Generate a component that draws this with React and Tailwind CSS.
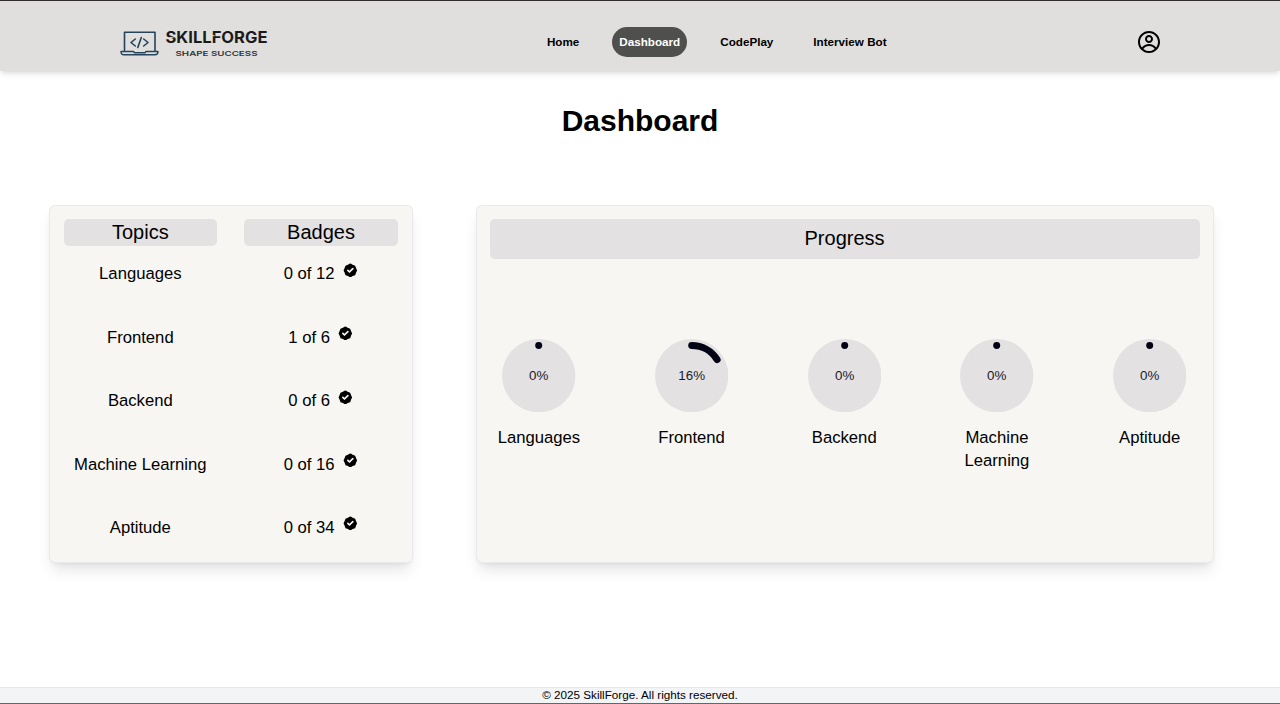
import { CgProfile } from "react-icons/cg";
import { HiBadgeCheck } from "react-icons/hi";

const links = ["Home", "Dashboard", "CodePlay", "Interview Bot"];

const topics = [
  { name: "Languages", earned: 0, total: 12, percent: 0 },
  { name: "Frontend", earned: 1, total: 6, percent: 16 },
  { name: "Backend", earned: 0, total: 6, percent: 0 },
  { name: "Machine Learning", earned: 0, total: 16, percent: 0 },
  { name: "Aptitude", earned: 0, total: 34, percent: 0 },
];

function Logo() {
  return (
    <svg width="150" height="32" viewBox="0 0 150 32" aria-label="SkillForge">
      <g fill="none" stroke="#24445c" strokeWidth="1.600" strokeLinejoin="round" strokeLinecap="round">
        <path d="M5.500 24.500V6.300h30.500v18.200" />
        <path d="M2 25.500h12.500l1 1.200h10.500l1-1.200h12c0 2-1 3.300-3 3.300H5c-2 0-3-1.300-3-3.300z" strokeWidth="1.400" />
        <path d="M16.300 13l-4.300 3.500 4.300 3.500M24.700 13l4.300 3.500-4.300 3.500M22.300 11.500l-3.500 10" />
      </g>
      <text x="46.500" y="17.400" textLength="102" lengthAdjust="spacingAndGlyphs" fill="#1b1b1b" className="font-['Inter'] text-[15.500px] font-bold">SKILLFORGE</text>
      <path d="M45 12.900l11.500-2.400M92 9.700h3.500" stroke="#e0dfdd" strokeWidth="1" />
      <text x="56.500" y="29.700" textLength="82" lengthAdjust="spacingAndGlyphs" fill="#333" className="font-['Inter'] text-[6.500px] font-semibold">SHAPE SUCCESS</text>
    </svg>
  );
}

function Ring({ percent }) {
  const length = 2 * Math.PI * 41;
  return (
    <svg className="size-[73.400px]" viewBox="0 0 100 100">
      <circle cx="50" cy="50" r="50" fill="#e3e1e2" />
      <path
        d="M50 50m0-41a41 41 0 1 1 0 82a41 41 0 1 1 0-82"
        fill="none"
        stroke="#020215"
        strokeWidth="9.500"
        strokeLinecap="round"
        strokeDasharray={`${(length * percent) / 100} ${length}`}
      />
      <text x="50" y="56" textAnchor="middle" fill="#1b1b2b" className="text-[18.200px]">{percent}%</text>
    </svg>
  );
}

export default function App() {
  return (
    <div className="flex h-[704px] flex-col overflow-hidden border-t border-b border-t-[#302c30] border-b-[#66666a] bg-white font-['Liberation_Sans',Arial,sans-serif] text-black">
      <header className="flex h-[70px] shrink-0 items-center justify-between bg-[#e0dfdd] pt-3 pr-[119.500px] pl-[119px] shadow-md">
        <div className="w-[302px]"><Logo /></div>
        <nav className="flex items-center gap-[26px] text-[11.670px] font-bold">
          {links.map((link) => (
            <a key={link} className={link === "Dashboard" ? "flex h-[30px] items-center rounded-full bg-[#4f4f4d] px-[7px] text-white" : "flex h-[30px] items-center px-[7px]"}>
              {link}
            </a>
          ))}
        </nav>
        <div className="flex w-[148px] justify-end"><CgProfile className="size-[24px]" /></div>
      </header>
      <main className="flex grow flex-col">
        <h1 className="mt-[30px] text-center text-[30px] leading-10 font-bold">Dashboard</h1>
        <div className="mt-[64px] flex h-[358px] gap-[63px] pr-[66px] pl-[49px]">
          <section className="w-[363.500px] shrink-0 rounded-md border border-gray-200/80 bg-[#f7f6f2] pr-[13.700px] pl-[13.500px] pt-[13px] shadow-lg">
            <div className="grid grid-cols-2 gap-x-[27px] text-center text-[20px] leading-[26.670px]">
              <h2 className="rounded-[5px] bg-[#e3e1e2]">Topics</h2>
              <h2 className="rounded-[5px] bg-[#e3e1e2]">Badges</h2>
            </div>
            <div className="mt-[16.800px] flex flex-col gap-10">
              {topics.map((topic) => (
                <div key={topic.name} className="grid h-[23.350px] grid-cols-2 gap-x-[27px] text-center text-[16.670px] leading-[23.350px]">
                  <div>{topic.name}</div>
                  <div className="flex justify-center gap-[7px]">
                    <span>{topic.earned} of {topic.total}</span>
                    <HiBadgeCheck className="-mt-[0.500px] size-[16.670px]" />
                  </div>
                </div>
              ))}
            </div>
          </section>
          <section className="grow rounded-md border border-gray-200/80 bg-[#f7f6f2] pr-[13.400px] pl-[13px] pt-[13px] shadow-lg">
            <h2 className="h-10 rounded-[5px] bg-[#e3e1e2] text-center text-[20px] leading-[39px]">Progress</h2>
            <div className="mt-[79.600px] flex justify-between pr-[0.600px]">
              {topics.map((topic) => (
                <div key={topic.name} className="flex w-[98.700px] flex-col items-center">
                  <Ring percent={topic.percent} />
                  <p className="mt-[13.700px] px-2 text-center text-[16.670px] leading-[23.350px]">{topic.name}</p>
                </div>
              ))}
            </div>
          </section>
        </div>
      </main>
      <footer className="h-4 shrink-0 border-t border-gray-200 bg-gray-100 text-center text-[11.700px] leading-[14px]">
        © 2025 SkillForge. All rights reserved.
      </footer>
    </div>
  );
}
